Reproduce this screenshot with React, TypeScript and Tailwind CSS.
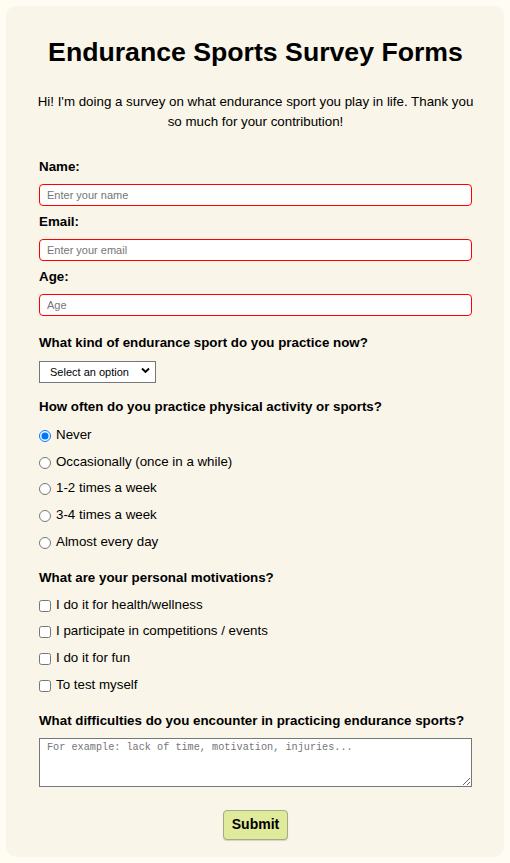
import React from "react";

const font = { fontFamily: '"Liberation Sans", Arial, sans-serif' };

function Radio({ label, checked }: { label: string; checked?: boolean }) {
  return (
    <label className="flex h-5 items-center text-[13.33px] leading-5 text-black">
      <input
        type="radio"
        name="freq"
        defaultChecked={checked}
        className="m-0 mr-[5px] mt-[2px] h-[12px] w-[12px]"
      />
      <span>{label}</span>
    </label>
  );
}

function Check({ label }: { label: string }) {
  return (
    <label className="flex h-5 items-center text-[13.33px] leading-5 text-black">
      <input type="checkbox" className="m-0 mr-[5px] mt-[2px] h-[12px] w-[12px]" />
      <span>{label}</span>
    </label>
  );
}

export default function App() {
  return (
    <div className="min-h-[863px] w-[510px] bg-[#fffcf3] p-[6px]" style={font}>
      <div className="flex flex-col rounded-[10px] bg-[#f9f5e9] pl-[33px] pr-[32px] pt-[30px] pb-[17px]">
        <h1 className="text-center text-[26.67px] font-bold leading-8 text-black">
          Endurance Sports Survey Forms
        </h1>
        <p className="-mx-[3px] mt-[24px] text-center text-[13.33px] leading-5 text-black">
          Hi! I'm doing a survey on what endurance sport you play in life. Thank you so much for your contribution!
        </p>

        <label className="mt-[25px] block text-[13.33px] font-bold leading-5 text-black">Name:</label>
        <input
          type="text"
          placeholder="Enter your name"
          className="mt-[7px] h-[22px] w-full rounded-[4px] border border-[#ff0000] bg-white px-[7px] text-[11px] placeholder:text-[#757575]"
        />
        <label className="mt-[6px] block text-[13.33px] font-bold leading-5 text-black">Email:</label>
        <input
          type="email"
          placeholder="Enter your email"
          className="mt-[7px] h-[22px] w-full rounded-[4px] border border-[#ff0000] bg-white px-[7px] text-[11px] placeholder:text-[#757575]"
        />
        <label className="mt-[6px] block text-[13.33px] font-bold leading-5 text-black">Age:</label>
        <input
          type="number"
          placeholder="Age"
          className="mt-[7px] h-[22px] w-full rounded-[4px] border border-[#ff0000] bg-white px-[7px] text-[11px] placeholder:text-[#757575]"
        />

        <div className="mt-[17px] text-[13.33px] font-bold leading-5 text-black">
          What kind of endurance sport do you practice now?
        </div>
        <div className="relative mt-[6px] h-[22px] w-[117px]">
          <select className="h-[22px] w-[117px] appearance-none border border-[#767676] bg-white pl-[10px] text-[11px] text-black outline-none">
            <option>Select an option</option>
            <option>Running</option>
            <option>Cycling</option>
            <option>Swimming</option>
            <option>Triathlon</option>
          </select>
          <svg
            className="pointer-events-none absolute right-[6px] top-[8px]"
            width="9"
            height="7"
            viewBox="0 0 9 7"
          >
            <path d="M1 1.5 L4.5 5 L8 1.5" fill="none" stroke="#000" strokeWidth="1.9" />
          </svg>
        </div>

        <div className="mt-[16px] text-[13.33px] font-bold leading-5 text-black">
          How often do you practice physical activity or sports?
        </div>
        <div className="mt-[8px] flex flex-col gap-[6.67px]">
          <Radio label="Never" checked />
          <Radio label="Occasionally (once in a while)" />
          <Radio label="1-2 times a week" />
          <Radio label="3-4 times a week" />
          <Radio label="Almost every day" />
        </div>

        <div className="mt-[16px] text-[13.33px] font-bold leading-5 text-black">
          What are your personal motivations?
        </div>
        <div className="mt-[7px] flex flex-col gap-[6.67px]">
          <Check label="I do it for health/wellness" />
          <Check label="I participate in competitions / events" />
          <Check label="I do it for fun" />
          <Check label="To test myself" />
        </div>

        <div className="mt-[16px] text-[13.33px] font-bold leading-5 text-black">
          What difficulties do you encounter in practicing endurance sports?
        </div>
        <textarea
          placeholder="For example: lack of time, motivation, injuries..."
          className="mt-[7px] h-[49px] w-full border border-[#767676] bg-white px-[7px] py-[2px] text-[10.2px] leading-[13px] placeholder:text-[#757575]"
          style={{ fontFamily: '"Liberation Mono", "DejaVu Sans Mono", monospace' }}
        />

        <div className="mt-[23px] flex justify-center">
          <button
            type="button"
            className="h-[30px] w-[65px] rounded-[4px] border border-[#a8a888] bg-[#dfea9b] text-[14px] font-bold text-black shadow-[0_1px_1px_rgba(0,0,0,0.15)]"
          >
            Submit
          </button>
        </div>
      </div>
    </div>
  );
}
